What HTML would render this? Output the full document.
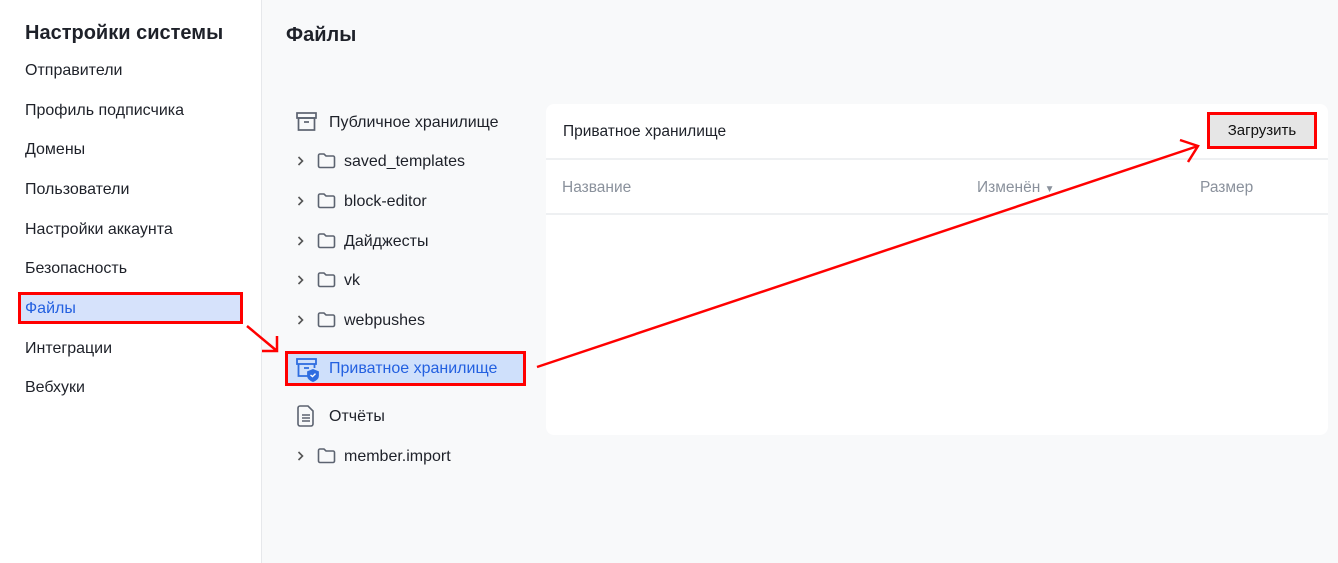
<!DOCTYPE html>
<html><head><meta charset="utf-8"><style>
*{box-sizing:border-box;margin:0;padding:0}
body{width:1338px;height:563px;overflow:hidden;background:#f8f9fa;font-family:"Liberation Sans",sans-serif;color:#1f2328;position:relative}
.side{position:absolute;left:0;top:0;width:262px;height:563px;background:#fff;border-right:1px solid #e6e8eb}
.side h1{position:absolute;left:25px;top:22px;font-size:20px;font-weight:bold;color:#1e2129}
.side .it{position:absolute;left:25px;font-size:16px;color:#1e2129}
.sel{position:absolute;left:18px;top:292px;width:225px;height:32px;background:#d6e2fb;border:3px solid #f00}
.main h2{position:absolute;left:286px;top:24px;font-size:20px;font-weight:bold;color:#1e2129}
.t{position:absolute;font-size:16px;color:#1e2129}
.chev{position:absolute;left:297px}
.psel{position:absolute;left:285px;top:351px;width:241px;height:35px;background:#cfe0fb;border:3px solid #f00}
.card{position:absolute;left:546px;top:104px;width:782px;height:331px;background:#fff;border-radius:8px}
.btn{position:absolute;left:1207px;top:112px;width:110px;height:37px;background:#e6e6e6;border:3px solid #f00;font-size:15px;text-align:center;line-height:31px;color:#111}
.hr{position:absolute;left:546px;width:782px;height:2px;background:#eef0f2}
.th{position:absolute;top:179px;font-size:15.5px;color:#8a919c}
</style></head><body>
<svg width="0" height="0" style="position:absolute"><defs>
<g id="f"><path d="M1.5 3.5a1.5 1.5 0 0 1 1.5-1.5h4l2 2h7a1.5 1.5 0 0 1 1.5 1.5v8.5a1.5 1.5 0 0 1-1.5 1.5H3a1.5 1.5 0 0 1-1.5-1.5z" fill="none" stroke="#5c6370" stroke-width="1.6"/></g>
<g id="c"><path d="M1.5 1l4 4-4 4" fill="none" stroke="#555" stroke-width="1.6"/></g>
</defs></svg>
<div class="side">
<h1>Настройки системы</h1>
<div class="it" style="top:62px">Отправители</div>
<div class="it" style="top:102px">Профиль подписчика</div>
<div class="it" style="top:141px">Домены</div>
<div class="it" style="top:181px">Пользователи</div>
<div class="it" style="top:221px">Настройки аккаунта</div>
<div class="it" style="top:260px">Безопасность</div>
<div class="sel"></div>
<div class="it" style="top:300px;color:#2360e0">Файлы</div>
<div class="it" style="top:340px">Интеграции</div>
<div class="it" style="top:379px">Вебхуки</div>
</div>
<div class="main">
<h2>Файлы</h2>
<svg style="position:absolute;left:296px;top:112px" width="22" height="20" viewBox="0 0 22 20" fill="none" stroke="#5c6370" stroke-width="1.7"><rect x="1" y="1" width="19" height="5"/><rect x="2.5" y="6" width="16" height="12"/><path d="M8 10h5"/></svg>
<div class="t" style="left:329px;top:114px">Публичное хранилище</div>
<svg class="chev" style="top:156px" width="8" height="10"><use href="#c"/></svg><svg style="position:absolute;left:317px;top:152px" width="20" height="18"><use href="#f"/></svg><div class="t" style="left:344px;top:153px">saved_templates</div>
<svg class="chev" style="top:196px" width="8" height="10"><use href="#c"/></svg><svg style="position:absolute;left:317px;top:192px" width="20" height="18"><use href="#f"/></svg><div class="t" style="left:344px;top:193px">block-editor</div>
<svg class="chev" style="top:236px" width="8" height="10"><use href="#c"/></svg><svg style="position:absolute;left:317px;top:232px" width="20" height="18"><use href="#f"/></svg><div class="t" style="left:344px;top:233px">Дайджесты</div>
<svg class="chev" style="top:275px" width="8" height="10"><use href="#c"/></svg><svg style="position:absolute;left:317px;top:271px" width="20" height="18"><use href="#f"/></svg><div class="t" style="left:344px;top:272px">vk</div>
<svg class="chev" style="top:315px" width="8" height="10"><use href="#c"/></svg><svg style="position:absolute;left:317px;top:311px" width="20" height="18"><use href="#f"/></svg><div class="t" style="left:344px;top:312px">webpushes</div>
<div class="psel"></div>
<svg style="position:absolute;left:296px;top:358px" width="24" height="24" viewBox="0 0 24 24" fill="none" stroke="#2f6de0" stroke-width="1.8"><rect x="1" y="1" width="19" height="5"/><path d="M2.5 6v12h9M18.5 6v4M8 10h5"/><path d="M17 12l5 2v4c0 2-2 4-5 5-3-1-5-3-5-5v-4z" fill="#2f6de0"/><path d="M14.5 17l2 1.6 3-3" stroke="#fff" stroke-width="1.4"/></svg>
<div class="t" style="left:329px;top:360px;color:#2360e0">Приватное хранилище</div>
<svg style="position:absolute;left:297px;top:405px" width="18" height="22" viewBox="0 0 18 22" fill="none" stroke="#5c6370" stroke-width="1.6"><path d="M3 1h8l5 5v13a2 2 0 0 1-2 2H3a2 2 0 0 1-2-2V3a2 2 0 0 1 2-2z"/><path d="M5 10h8M5 13h8M5 16h8"/></svg>
<div class="t" style="left:329px;top:408px">Отчёты</div>
<svg class="chev" style="top:451px" width="8" height="10"><use href="#c"/></svg><svg style="position:absolute;left:317px;top:447px" width="20" height="18"><use href="#f"/></svg><div class="t" style="left:344px;top:448px">member.import</div>
<div class="card"></div>
<div class="t" style="left:563px;top:123px;font-size:15.5px">Приватное хранилище</div>
<div class="hr" style="top:158px"></div>
<div class="th" style="left:562px">Название</div>
<div class="th" style="left:977px">Изменён <span style="font-size:10px">▼</span></div>
<div class="th" style="left:1200px">Размер</div>
<div class="hr" style="top:213px"></div>
<div class="btn">Загрузить</div>
</div>
<svg style="position:absolute;left:0;top:0" width="1338" height="563" fill="none" stroke="#f00" stroke-width="2.5"><path d="M247 326L277 351M262 351h15v-15"/><path d="M537 367L1198 146M1180 140l18 6-10 16"/></svg>
</body></html>
